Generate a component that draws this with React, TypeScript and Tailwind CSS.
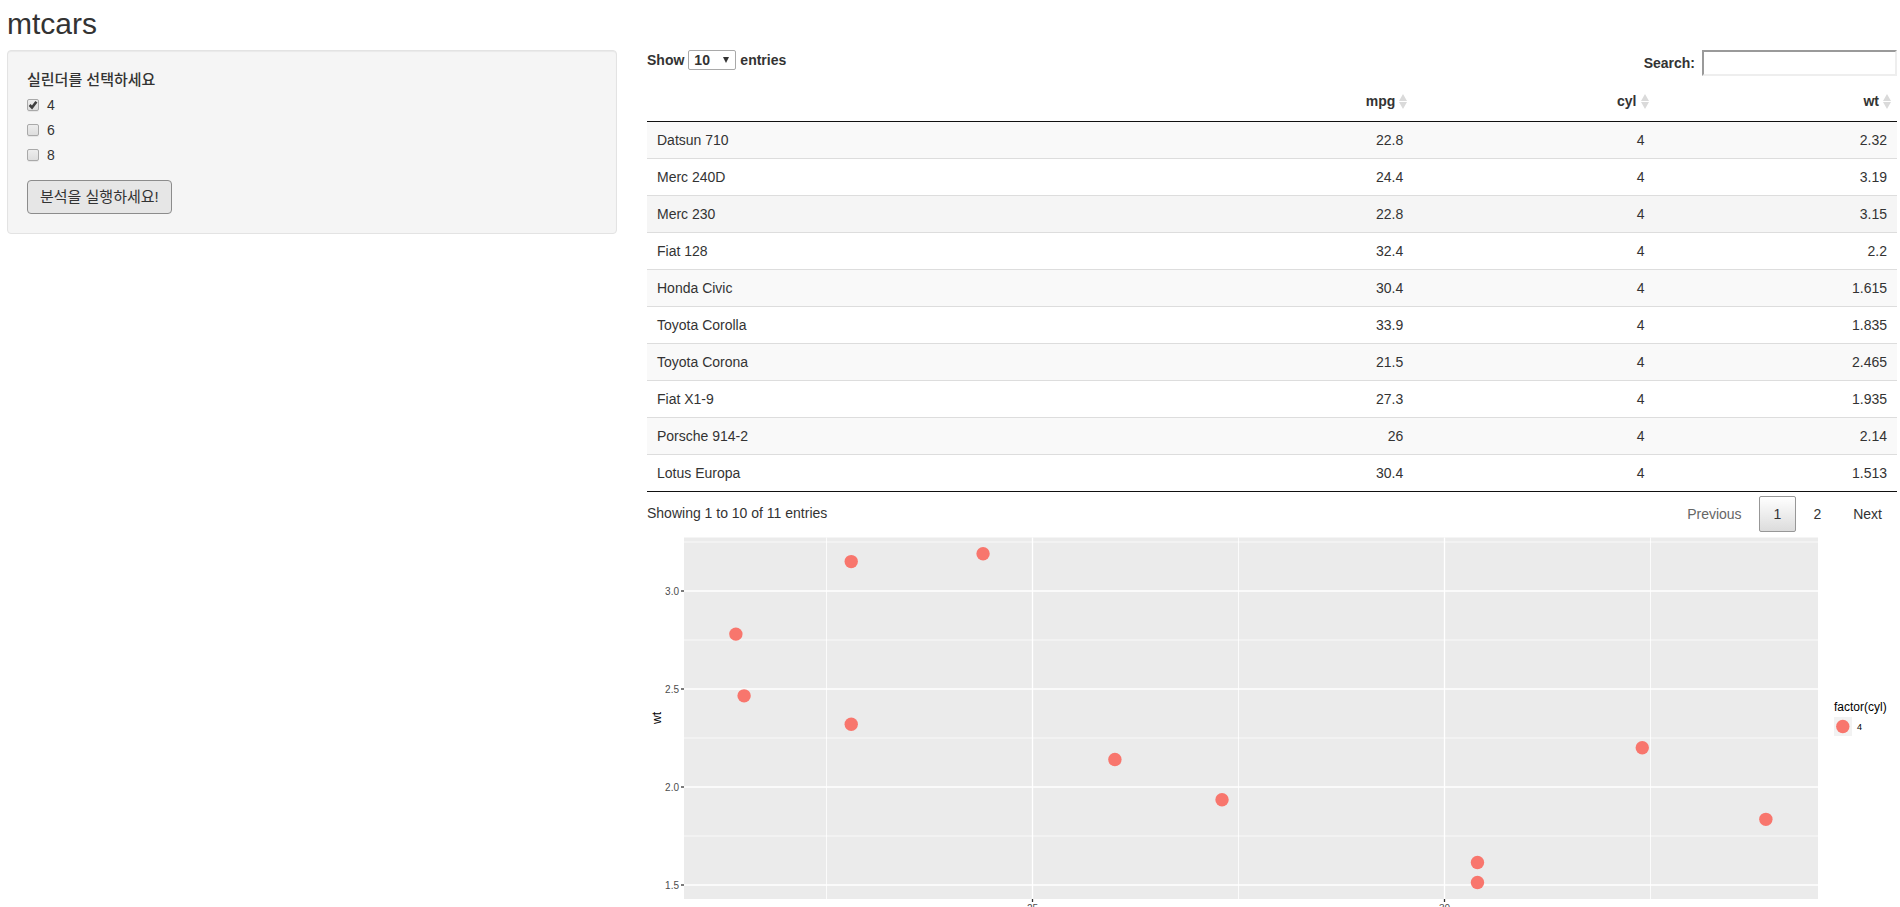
import { useState } from "react";

type Car = { name: string; mpg: number; cyl: number; wt: number };

const cars: Car[] = [
  { name: "Datsun 710", mpg: 22.8, cyl: 4, wt: 2.32 },
  { name: "Merc 240D", mpg: 24.4, cyl: 4, wt: 3.19 },
  { name: "Merc 230", mpg: 22.8, cyl: 4, wt: 3.15 },
  { name: "Fiat 128", mpg: 32.4, cyl: 4, wt: 2.2 },
  { name: "Honda Civic", mpg: 30.4, cyl: 4, wt: 1.615 },
  { name: "Toyota Corolla", mpg: 33.9, cyl: 4, wt: 1.835 },
  { name: "Toyota Corona", mpg: 21.5, cyl: 4, wt: 2.465 },
  { name: "Fiat X1-9", mpg: 27.3, cyl: 4, wt: 1.935 },
  { name: "Porsche 914-2", mpg: 26, cyl: 4, wt: 2.14 },
  { name: "Lotus Europa", mpg: 30.4, cyl: 4, wt: 1.513 },
  { name: "Volvo 142E", mpg: 21.4, cyl: 4, wt: 2.78 },
];

const plotX = (mpg: number) => 385.5 + (mpg - 25) * 82.4;
const plotY = (wt: number) => 59 + (3 - wt) * 196;

function SortIcon() {
  return (
    <svg width="8" height="15" viewBox="0 0 8 15" className="shrink-0" aria-hidden="true">
      <path d="M4 0 8 7H0zM4 15 0 8h8z" fill="#dadada" />
    </svg>
  );
}

function HeaderCell({ label, className }: { label: string; className: string }) {
  return (
    <th scope="col" className={`pb-2.5 pt-2.5 pr-1.5 font-bold leading-5 ${className}`}>
      <button type="button" className="ml-auto flex items-center gap-1 font-bold">
        {label}
        <SortIcon />
      </button>
    </th>
  );
}

function Sidebar() {
  const [picked, setPicked] = useState<number[]>([4]);
  const toggle = (n: number) =>
    setPicked((p) => (p.includes(n) ? p.filter((v) => v !== n) : [...p, n]));

  return (
    <form
      className="col-span-4 self-start rounded border border-[#e3e3e3] bg-[#f5f5f5] p-[19px] shadow-[inset_0_1px_1px_rgba(0,0,0,0.05)]"
      onSubmit={(e) => e.preventDefault()}
    >
      <fieldset>
        <legend className="text-[15px] font-medium leading-5">실린더를 선택하세요</legend>
        <div className="mt-[5px] flex flex-col gap-[5px]">
          {[4, 6, 8].map((n) => (
            <label key={n} className="flex items-center gap-2 leading-5">
              <span className="relative flex h-3 w-3">
                <input
                  type="checkbox"
                  checked={picked.includes(n)}
                  onChange={() => toggle(n)}
                  className="h-3 w-3 appearance-none rounded-[2px] border border-[#a9a9a9] bg-linear-to-b from-[#ededed] to-[#dedede] shadow-[0_1px_0_rgba(0,0,0,0.06)]"
                />
                {picked.includes(n) && (
                  <svg viewBox="0 0 12 12" className="pointer-events-none absolute inset-0" aria-hidden="true">
                    <path d="M2.6 6 5 8.5 9.4 2.8" fill="none" stroke="#3f3f3f" strokeWidth="2.6" />
                  </svg>
                )}
              </span>
              {n}
            </label>
          ))}
        </div>
      </fieldset>
      <button
        type="submit"
        className="mt-[15px] rounded border border-[#8c8c8c] bg-[#e6e6e6] px-3 py-1.5 text-[15px] leading-5"
      >
        분석을 실행하세요!
      </button>
    </form>
  );
}

function ScatterPlot() {
  return (
    <svg viewBox="0 0 1250 400" className="block h-auto w-full" role="img" aria-label="wt / mpg">
      <rect x="37" y="5.5" width="1134" height="361.5" fill="#ebebeb" />
      <g stroke="#f5f5f5" strokeWidth="1.4">
        {[3.25, 2.75, 2.25, 1.75].map((v) => (
          <line key={v} x1="37" x2="1171" y1={plotY(v)} y2={plotY(v)} />
        ))}
      </g>
      <g stroke="#ffffff" strokeWidth="0.8">
        {[22.5, 27.5, 32.5].map((v) => (
          <line key={v} x1={plotX(v)} x2={plotX(v)} y1="5.5" y2="367" />
        ))}
      </g>
      <g stroke="#ffffff" strokeWidth="1.6">
        {[3, 2.5, 2, 1.5].map((v) => (
          <line key={v} x1="37" x2="1171" y1={plotY(v)} y2={plotY(v)} />
        ))}
      </g>
      <g stroke="#ffffff" strokeWidth="1.3">
        {[25, 30].map((v) => (
          <line key={v} x1={plotX(v)} x2={plotX(v)} y1="5.5" y2="367" />
        ))}
      </g>
      <g fill="#f8766d">
        {cars.map((c) => (
          <circle key={c.name} cx={plotX(c.mpg)} cy={plotY(c.wt)} r="6.7" />
        ))}
      </g>
      <g stroke="#333333" strokeWidth="1.3">
        {[3, 2.5, 2, 1.5].map((v) => (
          <line key={v} x1="34" x2="37" y1={plotY(v)} y2={plotY(v)} />
        ))}
        {[25, 30].map((v) => (
          <line key={v} x1={plotX(v)} x2={plotX(v)} y1="367" y2="370" />
        ))}
      </g>
      <g fill="#4d4d4d" fontSize="10">
        {[3, 2.5, 2, 1.5].map((v) => (
          <text key={v} x="32" y={plotY(v) + 4} textAnchor="end">
            {v.toFixed(1)}
          </text>
        ))}
        {[25, 30].map((v) => (
          <text key={v} x={plotX(v)} y="380" textAnchor="middle">
            {v}
          </text>
        ))}
      </g>
      <g fill="#000000" fontSize="12">
        <text x="604" y="393" textAnchor="middle">mpg</text>
        <text transform="translate(14 186) rotate(-90)" textAnchor="middle">wt</text>
        <text x="1187" y="179">factor(cyl)</text>
        <text x="1210" y="198" fontSize="9">4</text>
      </g>
      <rect x="1187" y="185" width="18" height="19" fill="#f2f2f2" />
      <circle cx="1195.8" cy="194.5" r="6.7" fill="#f8766d" />
    </svg>
  );
}

function CarTable() {
  const [size, setSize] = useState("10");
  const [active, setActive] = useState("Merc 230");
  return (
    <section className="col-span-8">
      <div className="flex items-start justify-between font-bold leading-5">
        <label className="flex items-center gap-1">
          Show
          <span className="relative flex">
            <select
              value={size}
              onChange={(e) => setSize(e.target.value)}
              className="h-5 w-12 appearance-none rounded-[2px] border border-[#a9a9a9] bg-white pl-[5px] font-bold leading-4"
            >
              <option>10</option>
              <option>25</option>
              <option>50</option>
              <option>100</option>
            </select>
            <svg viewBox="0 0 6 6" className="pointer-events-none absolute right-[7px] top-[7px] h-1.5 w-1.5" aria-hidden="true">
              <path d="M0 0h6L3 6z" fill="#333333" />
            </svg>
          </span>
          entries
        </label>
        <label className="flex items-center gap-[7px]">
          Search:
          <input
            type="search"
            className="h-[26px] w-[195px] border-2 border-b-[#eeeeee] border-l-[#9a9a9a] border-r-[#eeeeee] border-t-[#9a9a9a] bg-white px-1 font-normal outline-none"
          />
        </label>
      </div>

      <table className="mt-[5px] w-full table-fixed border-collapse border-b border-[#111111]">
        <thead>
          <tr className="border-b border-[#111111]">
            <td className="w-[39.5%]" />
            <HeaderCell label="mpg" className="w-[21.8%]" />
            <HeaderCell label="cyl" className="w-[19.3%]" />
            <HeaderCell label="wt" className="w-[19.4%]" />
          </tr>
        </thead>
        <tbody>
          {cars.slice(0, 10).map((c, i) => (
            <tr
              key={c.name}
              onMouseEnter={() => setActive(c.name)}
              className={`border-t border-[#dddddd] first:border-[#111111] ${
                active === c.name ? "bg-[#f5f5f5]" : i % 2 === 0 ? "bg-[#f9f9f9]" : "bg-white"
              }`}
            >
              <td className="px-2.5 py-2 leading-5">{c.name}</td>
              <td className="px-2.5 py-2 text-right leading-5">{c.mpg}</td>
              <td className="px-2.5 py-2 text-right leading-5">{c.cyl}</td>
              <td className="px-2.5 py-2 text-right leading-5">{c.wt}</td>
            </tr>
          ))}
        </tbody>
      </table>

      <div className="flex items-start justify-between">
        <p className="pt-[11px] leading-5">Showing 1 to 10 of 11 entries</p>
        <nav className="flex gap-0.5 pt-1 leading-5">
          <button type="button" disabled className="border border-transparent px-3.5 py-[7px] text-[#666666]">
            Previous
          </button>
          <button
            type="button"
            aria-current="page"
            className="rounded-[2px] border border-[#979797] bg-linear-to-b from-white to-[#dcdcdc] px-3.5 py-[7px]"
          >
            1
          </button>
          <button type="button" className="border border-transparent px-3.5 py-[7px]">
            2
          </button>
          <button type="button" className="border border-transparent px-3.5 py-[7px]">
            Next
          </button>
        </nav>
      </div>

      <ScatterPlot />
    </section>
  );
}

export default function App() {
  return (
    <main className="h-screen overflow-y-auto bg-white pl-[7px] pr-[3px] font-['Liberation_Sans','Noto_Sans_CJK_KR',sans-serif] text-sm text-[#333333] [scrollbar-width:none]">
      <h1 className="pb-[9px] pt-[7px] text-[30px] font-normal leading-[34px]">mtcars</h1>
      <div className="grid grid-cols-12 gap-x-[30px]">
        <Sidebar />
        <CarTable />
      </div>
    </main>
  );
}
